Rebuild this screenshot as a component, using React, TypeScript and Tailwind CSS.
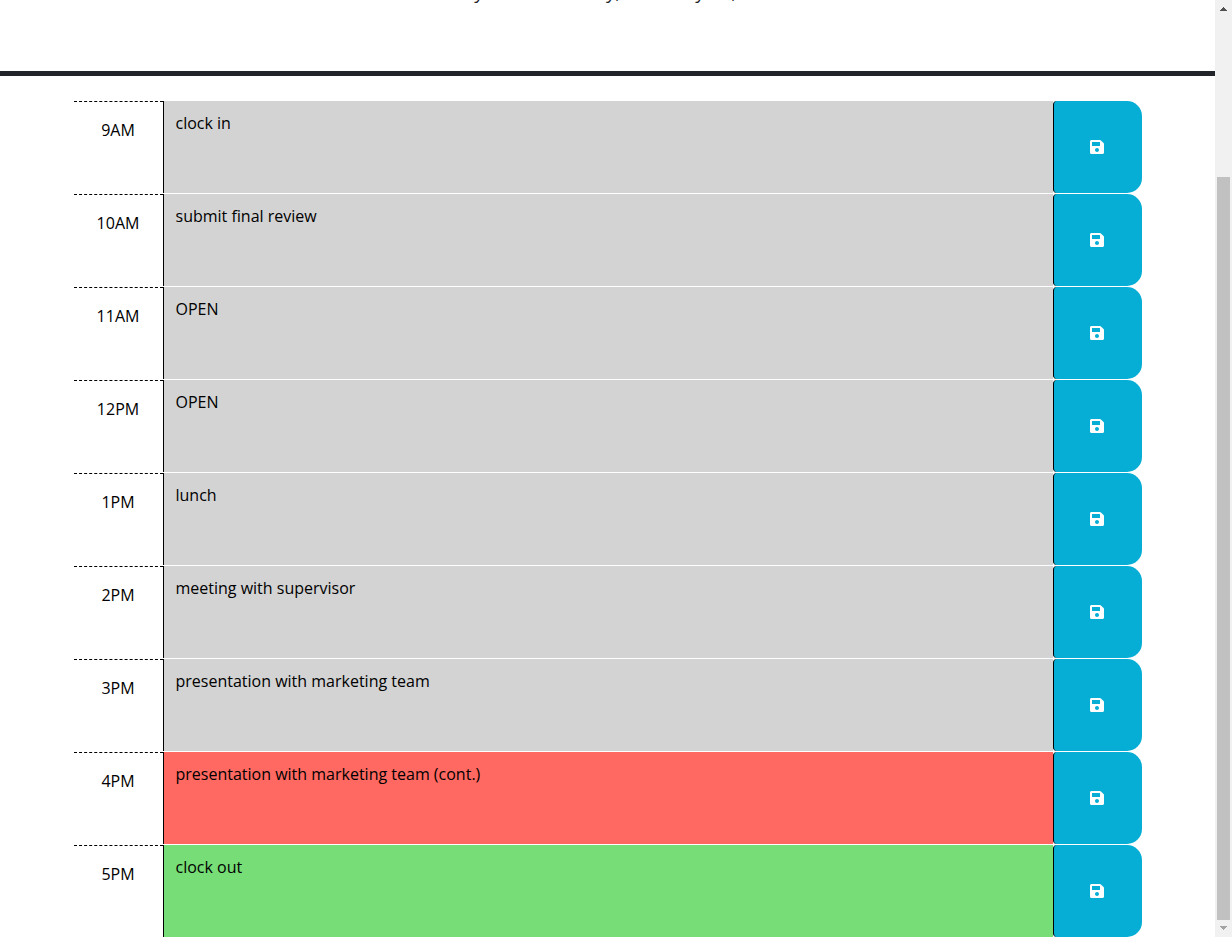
import { FaSave } from "react-icons/fa";

const tones = {
  past: "bg-[#d3d3d3]",
  present: "bg-[#ff6961]",
  future: "bg-[#77dd77]",
};

type Block = { hour: string; text: string; tone: keyof typeof tones };

const blocks: Block[] = [
  { hour: "9AM", text: "clock in", tone: "past" },
  { hour: "10AM", text: "submit final review", tone: "past" },
  { hour: "11AM", text: "OPEN", tone: "past" },
  { hour: "12PM", text: "OPEN", tone: "past" },
  { hour: "1PM", text: "lunch", tone: "past" },
  { hour: "2PM", text: "meeting with supervisor", tone: "past" },
  { hour: "3PM", text: "presentation with marketing team", tone: "past" },
  { hour: "4PM", text: "presentation with marketing team (cont.)", tone: "present" },
  { hour: "5PM", text: "clock out", tone: "future" },
];

function TimeBlock({ hour, text, tone }: Block) {
  const id = `block-${hour}`;
  return (
    <div className="grid h-[93px] grid-cols-12 pb-px">
      <label htmlFor={id} className="border-t border-dashed border-black pt-4 text-center">
        {hour}
      </label>
      <textarea
        id={id}
        defaultValue={text}
        className={`col-span-10 block h-full w-full resize-none overflow-hidden border-l border-black px-3 py-2.5 outline-none ${tones[tone]}`}
      />
      <button
        type="button"
        aria-label={`Save ${hour}`}
        className="flex items-center justify-center rounded-l rounded-r-[15px] border-l border-black bg-[#06aed5] pr-0.5 text-white"
      >
        <FaSave size={16} />
      </button>
    </div>
  );
}

function ScrollTrack() {
  return (
    <div aria-hidden="true" className="flex w-[17px] shrink-0 flex-col items-center bg-[#f1f1f1]">
      <svg width="17" height="17" viewBox="0 0 17 17" shapeRendering="crispEdges" className="shrink-0">
        <path d="M8 7h1v1h1v1h1v1h1v1H5v-1h1V9h1V8h1z" fill="#505050" />
      </svg>
      <div className="mt-40 w-[13px] grow bg-[#c1c1c1]" />
      <svg width="17" height="17" viewBox="0 0 17 17" shapeRendering="crispEdges" className="shrink-0">
        <path d="M5 6h7v1h-1v1h-1v1H9v1H8V9H7V8H6V7H5z" fill="#a3a3a3" />
      </svg>
    </div>
  );
}

export default function App() {
  return (
    <div className="flex h-screen overflow-hidden bg-white font-['Open_Sans',sans-serif] text-base leading-6 text-black">
      <div className="min-w-0 grow overflow-hidden">
        <header className="flex h-[76px] flex-col justify-end overflow-hidden border-b-[5px] border-[#212529] pb-16 text-center">
          <p className="text-[19px] leading-[30px] text-[#212529]">Today is: Wednesday, February 16, 2022</p>
        </header>
        <main className="mx-auto mt-[25px] max-w-[1068px]">
          {blocks.map((block) => (
            <TimeBlock key={block.hour} {...block} />
          ))}
        </main>
      </div>
      <ScrollTrack />
    </div>
  );
}
